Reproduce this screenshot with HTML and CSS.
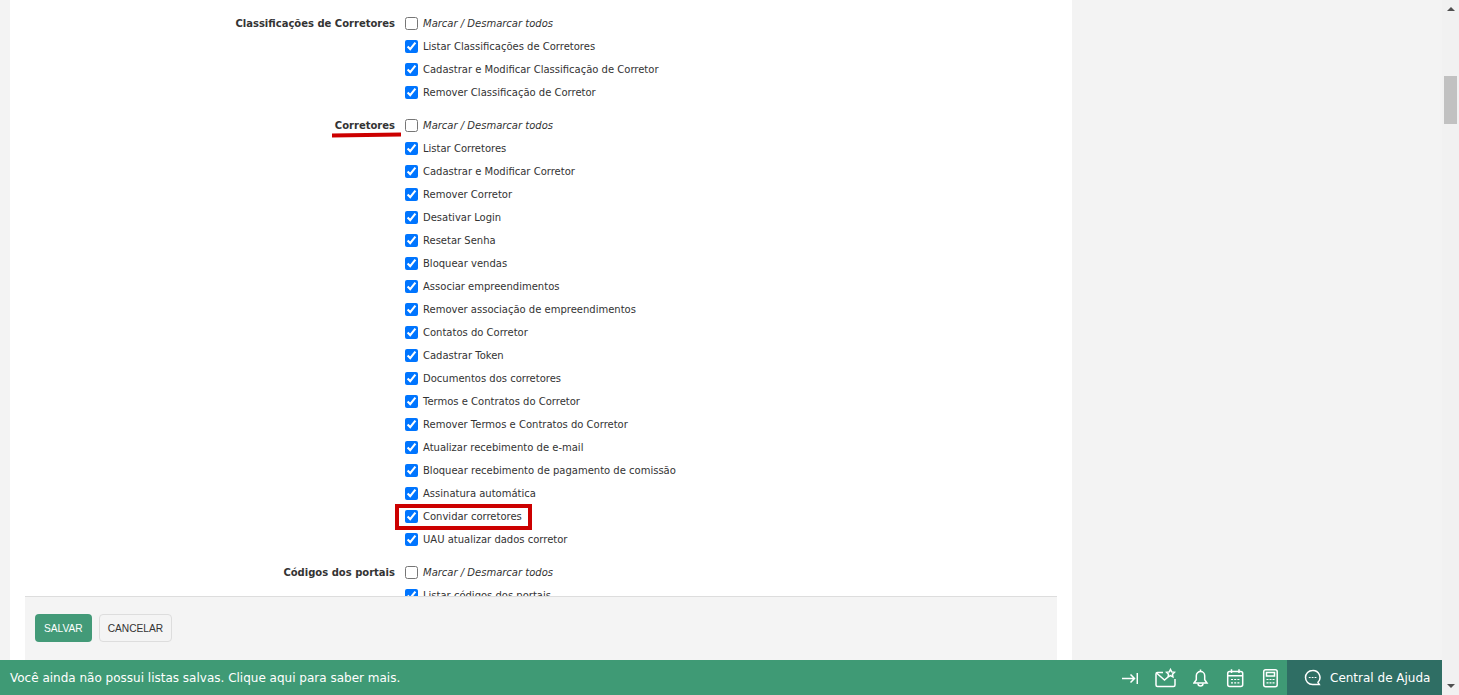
FILE: index.html
```html
<!DOCTYPE html>
<html lang="en">
<head>
	<meta charset="UTF-8">
	<title>Permissões</title>
	<link rel="stylesheet" href="styles.css">
</head>
<body>
	<div class="page">
		<div class="main">
			<div class="panel">
				<form class="perms">
					<div class="group">
						<div class="group-name">Classificações de Corretores</div>
						<div class="group-items">
							<label class="item all"><input type="checkbox">Marcar / Desmarcar todos</label>
							<label class="item"><input type="checkbox" checked>Listar Classificações de Corretores</label>
							<label class="item"><input type="checkbox" checked>Cadastrar e Modificar Classificação de Corretor</label>
							<label class="item"><input type="checkbox" checked>Remover Classificação de Corretor</label>
						</div>
					</div>
					<div class="group">
						<div class="group-name"><span class="underlined">Corretores</span></div>
						<div class="group-items">
							<label class="item all"><input type="checkbox">Marcar / Desmarcar todos</label>
							<label class="item"><input type="checkbox" checked>Listar Corretores</label>
							<label class="item"><input type="checkbox" checked>Cadastrar e Modificar Corretor</label>
							<label class="item"><input type="checkbox" checked>Remover Corretor</label>
							<label class="item"><input type="checkbox" checked>Desativar Login</label>
							<label class="item"><input type="checkbox" checked>Resetar Senha</label>
							<label class="item"><input type="checkbox" checked>Bloquear vendas</label>
							<label class="item"><input type="checkbox" checked>Associar empreendimentos</label>
							<label class="item"><input type="checkbox" checked>Remover associação de empreendimentos</label>
							<label class="item"><input type="checkbox" checked>Contatos do Corretor</label>
							<label class="item"><input type="checkbox" checked>Cadastrar Token</label>
							<label class="item"><input type="checkbox" checked>Documentos dos corretores</label>
							<label class="item"><input type="checkbox" checked>Termos e Contratos do Corretor</label>
							<label class="item"><input type="checkbox" checked>Remover Termos e Contratos do Corretor</label>
							<label class="item"><input type="checkbox" checked>Atualizar recebimento de e-mail</label>
							<label class="item"><input type="checkbox" checked>Bloquear recebimento de pagamento de comissão</label>
							<label class="item"><input type="checkbox" checked>Assinatura automática</label>
							<label class="item boxed"><input type="checkbox" checked>Convidar corretores</label>
							<label class="item"><input type="checkbox" checked>UAU atualizar dados corretor</label>
						</div>
					</div>
					<div class="group">
						<div class="group-name">Códigos dos portais</div>
						<div class="group-items">
							<label class="item all"><input type="checkbox">Marcar / Desmarcar todos</label>
							<label class="item"><input type="checkbox" checked>Listar códigos dos portais</label>
						</div>
					</div>
				</form>
				<div class="actions">
					<a href="#" class="btn btn-save">SALVAR</a>
					<a href="#" class="btn btn-cancel">CANCELAR</a>
				</div>
			</div>
			<div class="bar">
				<a href="#" class="bar-msg">Você ainda não possui listas salvas. Clique aqui para saber mais.</a>
				<div class="bar-icons">
					<svg class="icon" width="17" height="20" viewBox="0 0 17 20"><path d="M1 10.500h12.500M9.500 6.500l4 4-4 4M16.300 5v11"/></svg>
					<svg class="icon" width="21" height="20" viewBox="0 0 21 20"><path d="M8 4.500H2.500a1.500 1.500 0 0 0-1.500 1.500v11a1.500 1.500 0 0 0 1.500 1.500h16a1.500 1.500 0 0 0 1.500-1.500v-6"/><path d="M1.500 5l8 7 3.500-3"/><path d="M15.500 1.500l1.200 2.400 2.700.4-1.900 1.900.4 2.700-2.400-1.300-2.400 1.300.4-2.700-1.900-1.900 2.700-.4z"/></svg>
					<svg class="icon" width="16" height="20" viewBox="0 0 16 20"><path d="M7.500 3.500a4.200 4.200 0 0 0-4.200 4.200v4L1 15h13l-2.300-3.300v-4a4.200 4.200 0 0 0-4.200-4.200z"/><path d="M5 15.500a2.500 2.500 0 0 0 5 0M7.500 1.500v2"/></svg>
					<svg class="icon" width="19" height="20" viewBox="0 0 19 20"><rect x="1.700" y="3.500" width="15" height="15" rx="2"/><path d="M1.700 7.800h15M5.500 1.300v3.700M13 1.300v3.700"/><path class="dots" d="M5 11.500h2M8.200 11.500h2M11.400 11.500h2M5 14.800h2M8.200 14.800h2M11.400 14.800h2"/></svg>
					<svg class="icon" width="17" height="20" viewBox="0 0 17 20"><rect x="1.700" y="1.700" width="13.500" height="17" rx="2"/><rect x="4.500" y="4.500" width="8" height="3.500"/><path class="dots" d="M4.500 11.500h2M7.500 11.500h2M10.500 11.500h2M4.500 14.800h2M7.500 14.800h2M10.500 14.800h2"/></svg>
				</div>
				<a href="#" class="help">
					<svg class="icon" width="18" height="18" viewBox="0 0 18 18"><path d="M8.500 1.500a7 7 0 1 0 0 14h6.800l-1.300-2.200a7 7 0 0 0-5.500-11.800z"/><path class="dots" d="M4.800 8.500h1.800M7.700 8.500h1.800M10.600 8.500h1.800"/></svg>
					Central de Ajuda
				</a>
			</div>
		</div>
		<div class="scrollbar">
			<span class="arrow-up"></span>
			<span class="thumb"></span>
			<span class="arrow-down"></span>
		</div>
	</div>
</body>
</html>
```

FILE: styles.css
```css
html *{
	padding:0;
	margin:0;
	box-sizing:border-box;
}
html, body{
	height:100%;
	overflow:hidden;
}
body{
	background-color:#f3f3f3;
	font-family:"DejaVu Sans", Verdana, sans-serif;
	font-size:10px;
	color:#333;
}
a{
	text-decoration:none;
}
.page{
	display:flex;
	height:695px;
}
.main{
	flex:1;
	display:flex;
	flex-direction:column;
	min-width:0;
}
.panel{
	flex:1;
	min-height:0;
	width:1062px;
	margin-left:10px;
	padding:0 15px;
	background-color:#fff;
	display:flex;
	flex-direction:column;
}

/* permissions list */
.perms{
	flex:1;
	min-height:0;
	overflow:hidden;
	padding-top:12px;
}
.group{
	display:grid;
	grid-template-columns:370px 1fr;
	column-gap:10px;
	margin-bottom:10px;
}
.group-name{
	height:23px;
	line-height:23px;
	text-align:right;
	font-weight:bold;
}
.underlined{
	position:relative;
	display:inline-block;
}
.underlined::after{
	content:"";
	position:absolute;
	left:-3px;
	right:-6px;
	bottom:0;
	height:4px;
	background-color:#cc0000;
	transform:rotate(-0.8deg);
}
.item{
	display:flex;
	align-items:center;
	height:23px;
}
.item input{
	width:13px;
	height:13px;
	margin-right:5px;
	flex:none;
}
.all{
	font-style:italic;
}
.boxed{
	position:relative;
}
.boxed::after{
	content:"";
	box-sizing:border-box;
	position:absolute;
	left:-10px;
	top:-1px;
	width:137px;
	height:26px;
	border:4px solid #cc0000;
}

/* save / cancel */
.actions{
	flex:none;
	height:64px;
	background-color:#f4f4f4;
	border-top:1px solid #ddd;
	padding:17px 10px 0;
	display:flex;
	align-items:flex-start;
	gap:7px;
}
.btn{
	height:28px;
	line-height:27px;
	padding:0 8px;
	border:1px solid transparent;
	border-radius:4px;
	font-family:"Liberation Sans", Arial, sans-serif;
	font-size:10.2px;
}
.btn-save{
	background-color:#439a78;
	color:#fff;
}
.btn-cancel{
	border-color:#ddd;
	color:#333;
}

/* bottom bar */
.bar{
	flex:none;
	height:35px;
	background-color:#3f9a75;
	display:flex;
	align-items:center;
	color:#fff;
}
.bar-msg{
	flex:1;
	padding-left:10px;
	font-size:12px;
	color:#fff;
}
.bar-icons{
	display:flex;
	align-items:center;
	gap:17px;
	margin-right:8px;
}
.icon{
	fill:none;
	stroke:#fff;
	stroke-width:1.5;
	flex:none;
}
.dots{
	stroke-width:1.2;
}
.help{
	width:155px;
	height:35px;
	padding-left:17px;
	background-color:#2f6e64;
	display:flex;
	align-items:center;
	gap:8px;
	font-size:12px;
	color:#fff;
}

/* page scrollbar */
.scrollbar{
	flex:none;
	width:17px;
	background-color:#f1f1f1;
	display:flex;
	flex-direction:column;
	align-items:center;
}
.arrow-up, .arrow-down{
	width:0;
	height:0;
	border-left:4px solid transparent;
	border-right:4px solid transparent;
}
.arrow-up{
	margin-top:7px;
	border-bottom:4px solid #505050;
}
.thumb{
	width:13px;
	height:48px;
	margin-top:65px;
	background-color:#c1c1c1;
}
.arrow-down{
	margin-top:auto;
	margin-bottom:7px;
	border-top:4px solid #505050;
}
```
